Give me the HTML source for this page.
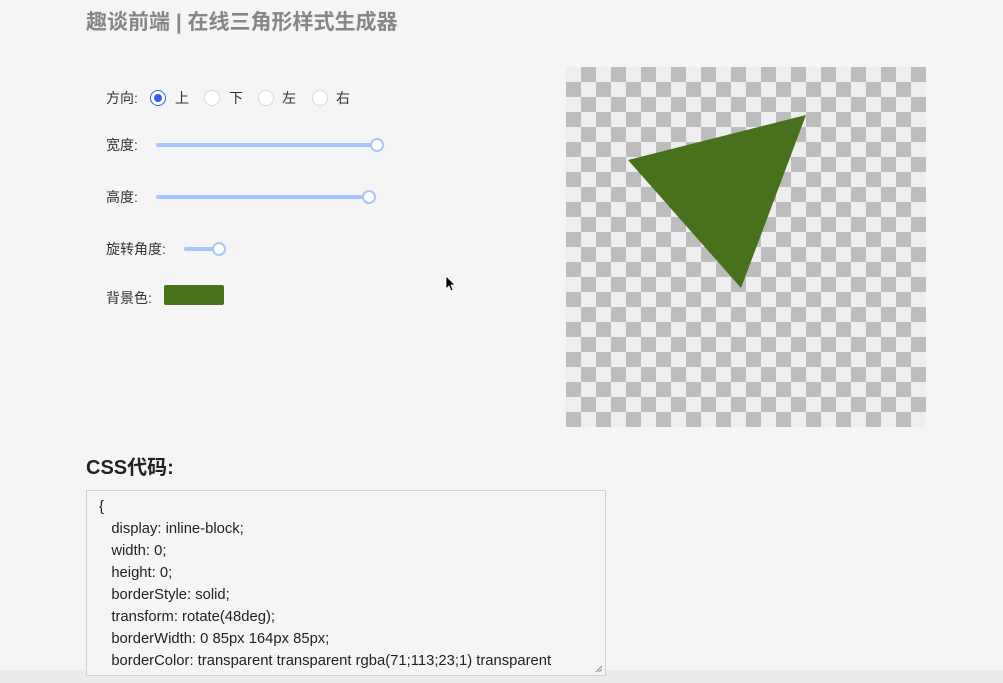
<!DOCTYPE html>
<html><head><meta charset="utf-8"><style>
body{margin:0;width:1003px;height:683px;background:#f5f5f5;position:relative;overflow:hidden;font-family:"Liberation Sans","Noto Sans CJK SC",sans-serif;color:#222}
.a{position:absolute;white-space:nowrap}
.t{font-size:21px;font-weight:bold;color:#878787;left:86px;top:6px}
.l{font-size:14px;color:#333;line-height:16px}
.r{position:absolute;width:16px;height:16px;border:1px solid #d9d9d9;border-radius:50%;background:#fff;box-sizing:border-box}
.track{position:absolute;height:4px;background:#a8c6fb;border-radius:2px}
.knob{position:absolute;width:14px;height:14px;border:2px solid #a8c6fb;border-radius:50%;background:#fff;box-sizing:border-box}
.ta{position:absolute;left:86px;top:490px;width:520px;height:186px;box-sizing:border-box;border:1px solid #d0d0d0;background:#f5f5f5;font-size:14.8px;line-height:22px;padding:5px 0 0 12px;color:#222}
</style></head><body>
<div class="a t">趣谈前端 | 在线三角形样式生成器</div>
<div class="a l" style="left:106px;top:90px">方向:</div>
<div class="r" style="left:150px;top:90px;border-color:#2f5ef2"><div style="position:absolute;left:3px;top:3px;width:8px;height:8px;border-radius:50%;background:#2f5ef2"></div></div>
<div class="a l" style="left:175px;top:90px">上</div>
<div class="r" style="left:204px;top:90px"></div><div class="a l" style="left:229px;top:90px">下</div>
<div class="r" style="left:258px;top:90px"></div><div class="a l" style="left:282px;top:90px">左</div>
<div class="r" style="left:312px;top:90px"></div><div class="a l" style="left:336px;top:90px">右</div>
<div class="a l" style="left:106px;top:137px">宽度:</div>
<div class="track" style="left:156px;top:143px;width:222px"></div><div class="knob" style="left:370px;top:138px"></div>
<div class="a l" style="left:106px;top:189px">高度:</div>
<div class="track" style="left:156px;top:195px;width:214px"></div><div class="knob" style="left:362px;top:190px"></div>
<div class="a l" style="left:106px;top:241px">旋转角度:</div>
<div class="track" style="left:184px;top:247px;width:30px"></div><div class="knob" style="left:212px;top:242px"></div>
<div class="a l" style="left:106px;top:290px">背景色:</div>
<div class="a" style="left:164px;top:285px;width:60px;height:20px;background:#47711a;border-radius:2px"></div>
<svg class="a" style="left:0;top:0" width="1003" height="683">
<defs><pattern id="p" x="566" y="67" width="30" height="30" patternUnits="userSpaceOnUse">
<rect width="30" height="30" fill="#eee"/><rect x="15" y="0" width="15" height="15" fill="#bdbdbd"/><rect x="0" y="15" width="15" height="15" fill="#bdbdbd"/></pattern></defs>
<rect x="566" y="67" width="360" height="360" fill="url(#p)"/>
<polygon points="628,160 806,115 741,288" fill="#47711a"/>
<path d="M446,276 L446,289 L449,286 L451,291 L453,290 L451,285 L455,285 Z" fill="#000" stroke="#fff" stroke-width="0.8"/></svg>
<div class="a" style="left:86px;top:451px;font-size:20px;font-weight:bold;color:#222">CSS代码:</div>
<div style="position:absolute;left:0;top:670px;width:1003px;height:13px;background:#ebebeb"></div>
<div class="ta">{<br>&nbsp;&nbsp;&nbsp;display: inline-block;<br>&nbsp;&nbsp;&nbsp;width: 0;<br>&nbsp;&nbsp;&nbsp;height: 0;<br>&nbsp;&nbsp;&nbsp;borderStyle: solid;<br>&nbsp;&nbsp;&nbsp;transform: rotate(48deg);<br>&nbsp;&nbsp;&nbsp;borderWidth: 0 85px 164px 85px;<br>&nbsp;&nbsp;&nbsp;borderColor: transparent transparent rgba(71;113;23;1) transparent
<svg style="position:absolute;right:2px;bottom:2px" width="8" height="8"><path d="M1,7 L7,1 M4,7 L7,4" stroke="#888" stroke-width="1"/></svg></div>
</body></html>
